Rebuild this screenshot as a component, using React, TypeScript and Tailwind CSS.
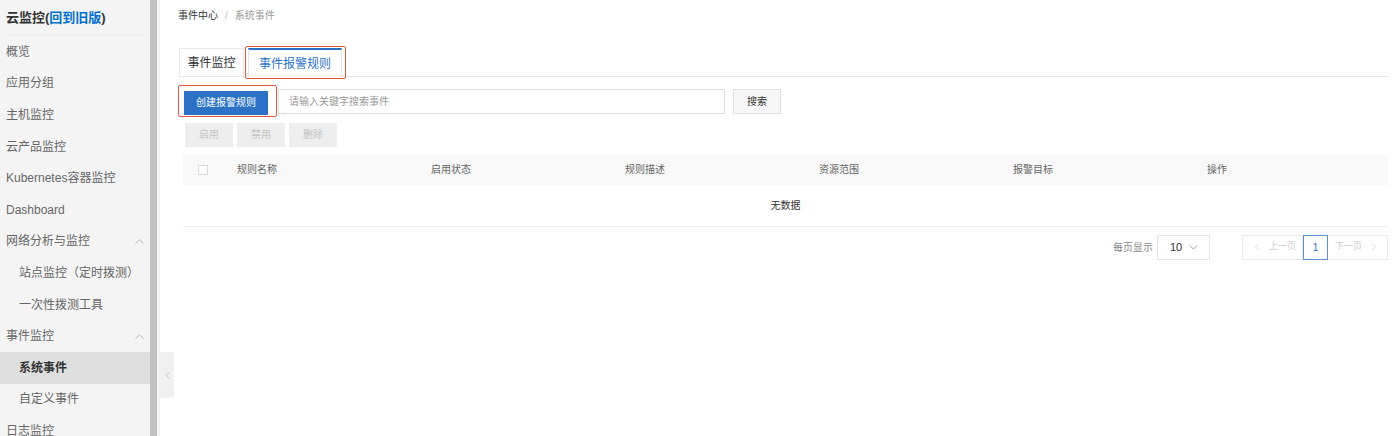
import { ChevronUp, ChevronLeft, ChevronRight, ChevronDown } from 'lucide-react'

const font = { fontFamily: '"Liberation Sans", "Noto Sans CJK SC", sans-serif' }

type MenuItem = { label: string; sub?: boolean; open?: boolean; active?: boolean }

const menu: MenuItem[] = [
  { label: '概览' },
  { label: '应用分组' },
  { label: '主机监控' },
  { label: '云产品监控' },
  { label: 'Kubernetes容器监控' },
  { label: 'Dashboard' },
  { label: '网络分析与监控', open: true },
  { label: '站点监控（定时拨测）', sub: true },
  { label: '一次性拨测工具', sub: true },
  { label: '事件监控', open: true },
  { label: '系统事件', sub: true, active: true },
  { label: '自定义事件', sub: true },
  { label: '日志监控' },
]

const columns = ['规则名称', '启用状态', '规则描述', '资源范围', '报警目标', '操作']

function Sidebar() {
  return (
    <aside className="w-[150px] shrink-0 bg-[#f4f4f4] h-[436px] overflow-hidden">
      <div className="h-[35px] mx-[6px] border-b border-[#ebebeb] flex items-center pt-[1px]">
        <span className="text-[13px] font-bold text-[#333]">
          云监控(<span className="text-[#0070cc]">回到旧版</span>)
        </span>
      </div>
      <nav className="pt-[1px]">
        {menu.map(item => (
          <div
            key={item.label}
            className={
              'h-[31.6px] flex items-center justify-between pr-[3px] text-[12px] ' +
              (item.sub ? 'pl-[19px] ' : 'pl-[6px] ') +
              (item.active ? 'bg-[#dedede] text-[#333] font-bold' : 'text-[#666]')
            }
          >
            <span className="whitespace-nowrap">{item.label}</span>
            {item.open && <ChevronUp className="w-[15px] h-[15px] text-[#aaa]" strokeWidth={1.3} />}
          </div>
        ))}
      </nav>
    </aside>
  )
}

export default function App() {
  return (
    <div className="flex w-[1400px] h-[436px] bg-white overflow-hidden" style={font}>
      <Sidebar />
      <div className="w-[7px] shrink-0 bg-[#c1c1c1]" />
      <div className="w-[3px] shrink-0 bg-[#f4f4f4]" />
      <div className="w-[19px] shrink-0 flex flex-col">
        <div className="h-[352px]" />
        <div className="w-[14px] h-[46px] bg-[#f0f0f0] rounded-r-[3px] flex items-center justify-center">
          <ChevronLeft className="w-[11px] h-[11px] text-[#aaa]" strokeWidth={1.5} />
        </div>
      </div>

      <main className="flex-1 pr-[12px] pt-[9px]">
        {/* Breadcrumb */}
        <div className="h-[13px] flex items-center gap-[5px] text-[10px] -ml-[1px]">
          <span className="text-[#333]">事件中心</span>
          <span className="text-[#bbb] px-[2px]">/</span>
          <span className="text-[#999]">系统事件</span>
        </div>

        {/* Tabs */}
        <div className="mt-[24px] h-[31px] flex items-end border-b border-[#e5e5e5]">
          <div className="h-[29px] w-[65px] -mb-[1px] border border-[#e8e8e8] flex items-center justify-center text-[12px] text-[#333] bg-white">
            事件监控
          </div>
          <div className="relative ml-[4px] h-[29px] w-[94px] -mb-[1px] border-x border-[#e8e8e8] border-t-2 border-t-[#2b72c7] bg-white flex items-center justify-center text-[12px] text-[#2b72c7]">
            事件报警规则
            <div className="absolute -left-[4px] -top-[4px] w-[101px] h-[33px] border-[1.5px] border-[#e0573e] rounded-[2px]" />
          </div>
        </div>

        {/* Toolbar */}
        <div className="mt-[12px] flex items-center">
          <div className="relative ml-[5px]">
            <button className="h-[24px] w-[84px] bg-[#2b72c7] text-white text-[10px]">创建报警规则</button>
            <div className="absolute -left-[6px] -top-[4px] w-[99px] h-[32px] border-[1.5px] border-[#e0573e] rounded-[2px]" />
          </div>
          <div className="ml-[10px] h-[25px] w-[447px] border border-[#dddddd] flex items-center px-[10px] text-[10px] text-[#999]">
            请输入关键字搜索事件
          </div>
          <button className="ml-[8px] h-[25px] w-[48px] border border-[#e0e0e0] bg-[#f7f7f7] text-[10px] text-[#333]">搜索</button>
        </div>

        <div className="mt-[8px] ml-[6px] flex gap-[4px]">
          {['启用', '禁用', '删除'].map(t => (
            <button key={t} className="h-[24px] w-[48px] bg-[#eeeeee] text-[10px] text-[#c4c4c4]">{t}</button>
          ))}
        </div>

        {/* Table */}
        <div className="mt-[8px] ml-[4px]">
          <div className="grid grid-cols-[54px_194px_194px_194px_194px_194px_1fr] h-[30px] items-center bg-[#f8f8f8] text-[10px] text-[#666]">
            <div className="pl-[15px]">
              <div className="w-[10px] h-[10px] border border-[#d9d9d9] bg-white" />
            </div>
            {columns.map(c => (
              <div key={c}>{c}</div>
            ))}
          </div>
          <div className="h-[42px] flex items-center justify-center border-b border-[#f0f0f0] text-[10px] text-[#333]">
            无数据
          </div>

          {/* Pagination */}
          <div className="mt-[8px] flex justify-end items-center">
            <span className="text-[10px] text-[#888] mr-[4px]">每页显示</span>
            <div className="h-[25px] w-[53px] border border-[#e5e5e5] flex items-center justify-between pl-[12px] pr-[9px] text-[11px] text-[#333]">
              10
              <ChevronDown className="w-[13px] h-[13px] text-[#888]" strokeWidth={1.5} />
            </div>
            <div className="ml-[32px] flex h-[25px]">
              <div className="w-[61px] border border-[#eaeaea] flex items-center gap-[6px] pl-[8px] text-[9px] text-[#ccc]">
                <ChevronLeft className="w-[12px] h-[12px]" strokeWidth={1.5} />
                上一页
              </div>
              <div className="w-[25px] border border-[#5b8fd0] flex items-center justify-center text-[10px] text-[#2b72c7]">1</div>
              <div className="w-[60px] border border-[#eaeaea] border-l-0 flex items-center gap-[6px] pl-[7px] text-[9px] text-[#ccc]">
                下一页
                <ChevronRight className="w-[12px] h-[12px]" strokeWidth={1.5} />
              </div>
            </div>
          </div>
        </div>
      </main>
    </div>
  )
}
